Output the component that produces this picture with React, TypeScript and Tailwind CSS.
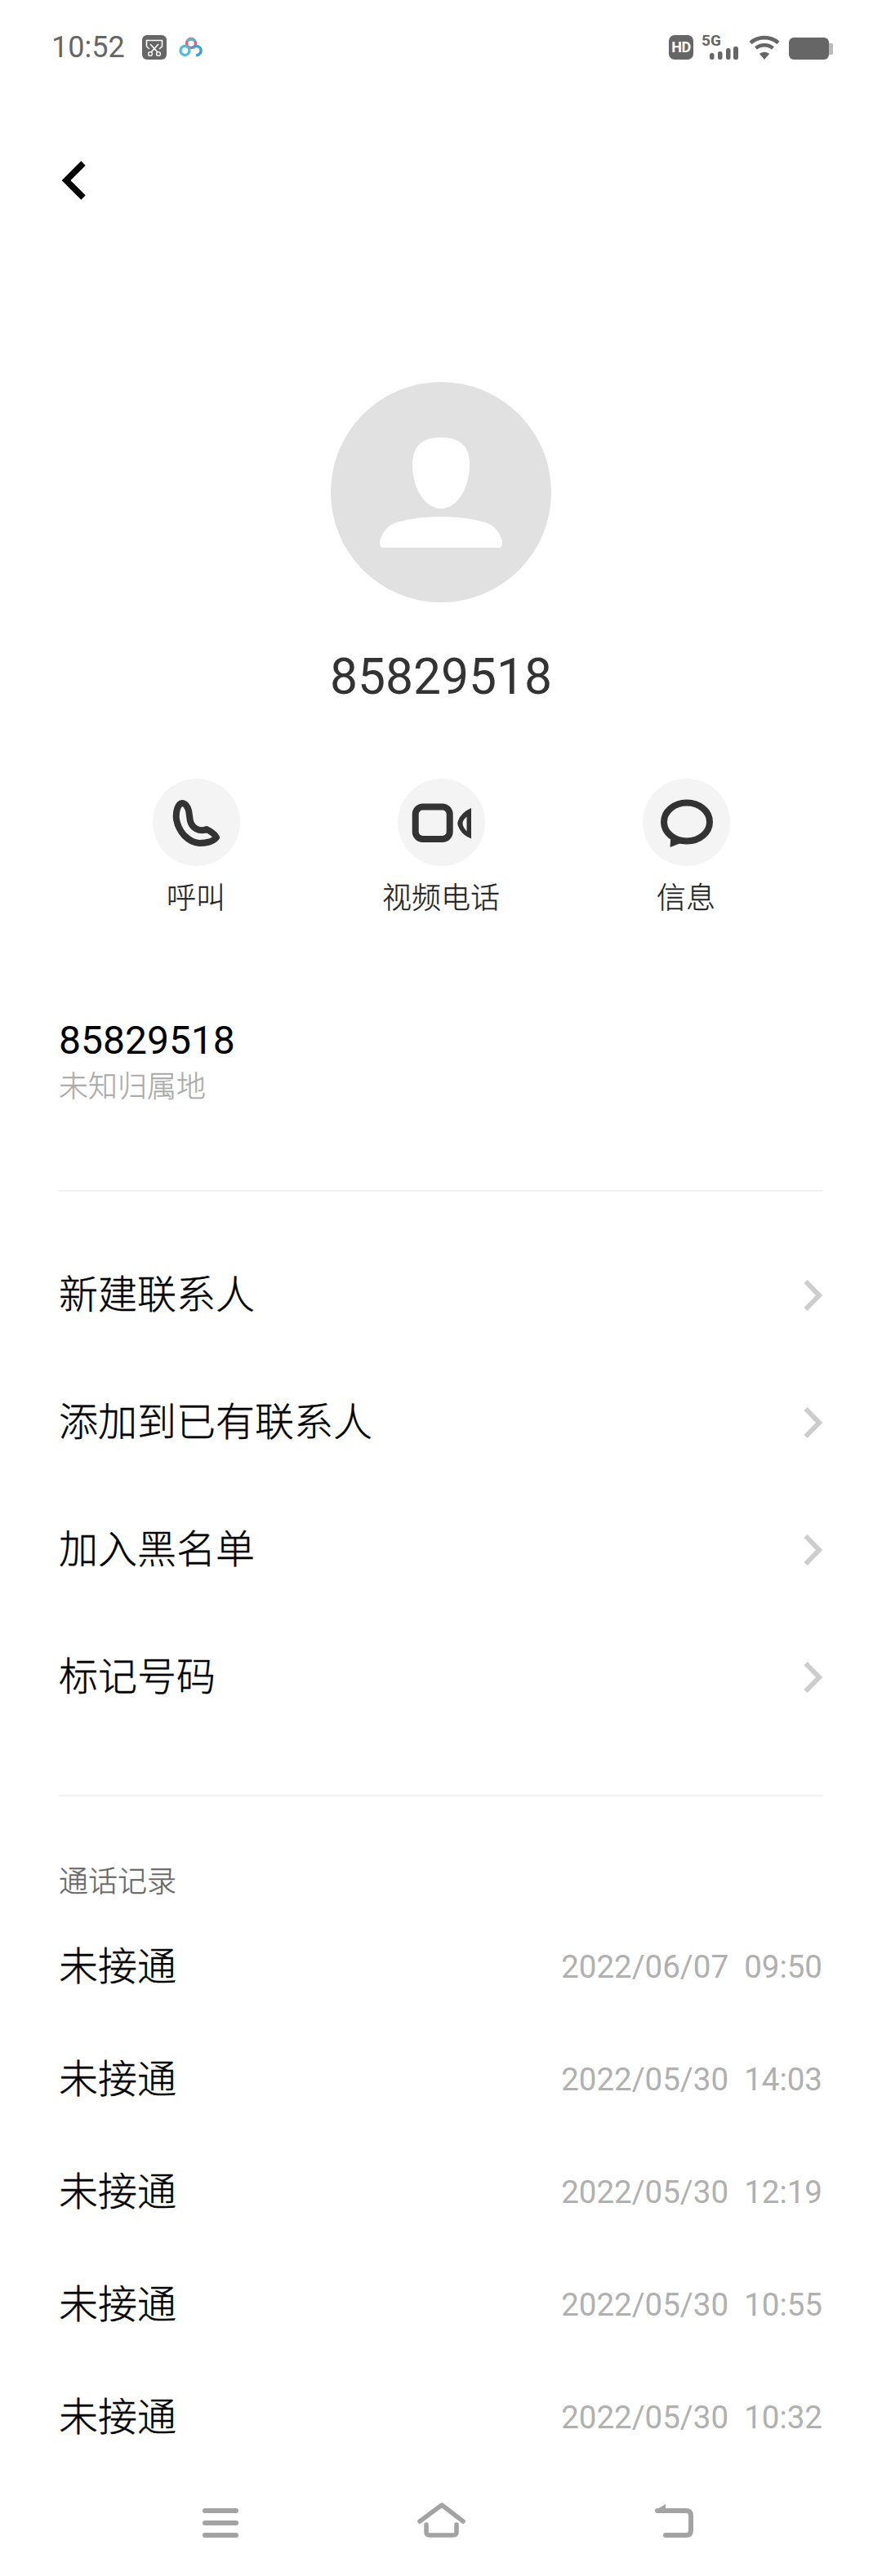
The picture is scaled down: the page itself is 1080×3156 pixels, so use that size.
const font = 'font-["Roboto","Noto_Sans_CJK_SC",sans-serif]';

function Chevron() {
  return (
    <svg width="24" height="40" viewBox="0 0 24 40" className="shrink-0">
      <path d="M3.5 3 L20 20 L3.5 37" fill="none" stroke="#cdcdcd" strokeWidth="6" />
    </svg>
  );
}

function ActionButton({ label, children }: { label: string; children: React.ReactNode }) {
  return (
    <div className="flex w-[300px] flex-col items-center">
      <div className="flex h-[107px] w-[107px] items-center justify-center rounded-full bg-[#f4f4f4]">
        <svg width="107" height="107" viewBox="0 0 107 107">{children}</svg>
      </div>
      <div className="mt-[15px] text-[36px] font-light leading-[50px] text-[#222222] [-webkit-text-stroke:0.3px_#222222]">{label}</div>
    </div>
  );
}

const menu = ["新建联系人", "添加到已有联系人", "加入黑名单", "标记号码"];
const records = [
  "2022/06/07  09:50",
  "2022/05/30  14:03",
  "2022/05/30  12:19",
  "2022/05/30  10:55",
  "2022/05/30  10:32",
];

export default function App() {
  return (
    <div className={`flex h-[3156px] w-[1080px] flex-col overflow-hidden bg-white ${font}`}>
      {/* status bar */}
      <div className="flex h-[116px] items-start justify-between pl-[63px] pr-[60px] pt-[43px]">
        <div className="flex items-center">
          <span className="text-[36px] leading-[30px] text-[#666666]">10:52</span>
          <svg width="30" height="30" viewBox="0 0 30 30" className="ml-[21px]">
            <rect width="30" height="30" rx="6" fill="#666666" />
            <path d="M5.5 14V6.5H24.5V14L21 17" fill="none" stroke="#fff" strokeWidth="1.6" />
            <path d="M5.5 14L9 17" fill="none" stroke="#fff" strokeWidth="1.6" />
            <path d="M10 11L19 21M20 11L11 21" fill="none" stroke="#fff" strokeWidth="1.6" />
            <circle cx="10" cy="23" r="2.4" fill="none" stroke="#fff" strokeWidth="1.4" />
            <circle cx="20" cy="23" r="2.4" fill="none" stroke="#fff" strokeWidth="1.4" />
          </svg>
          <svg width="30" height="26" viewBox="0 0 30 26" className="ml-[15px]">
            <circle cx="15" cy="8" r="5.5" fill="none" stroke="#e0607f" strokeWidth="3.4" />
            <path d="M10.5 5.5A5.5 5.5 0 0 1 19.5 5.5" fill="none" stroke="#52b8cf" strokeWidth="3.4" />
            <circle cx="7.5" cy="17" r="5.5" fill="none" stroke="#52bdd6" strokeWidth="3.4" />
            <path d="M17 14A5.5 5.5 0 1 1 21 22.5" fill="none" stroke="#3f9fcf" strokeWidth="3.4" />
          </svg>
        </div>
        <div className="flex items-start">
          <div className="flex h-[30px] w-[30px] items-center justify-center rounded-[7px] bg-[#666666] text-[18px] font-bold leading-none tracking-[-0.5px] text-white">
            HD
          </div>
          <div className="relative ml-[10px] h-[30px] w-[46px]">
            <span className="absolute left-0 top-[-2px] text-[19px] font-bold leading-[18px] text-[#666666]">5G</span>
            <svg width="46" height="30" viewBox="0 0 46 30" className="absolute left-0 top-0">
              <g fill="#666666">
                <rect x="10" y="22" width="5.5" height="8" rx="2.5" />
                <rect x="20" y="20" width="5.5" height="10" rx="2.5" />
                <rect x="30" y="16" width="5.5" height="14" rx="2.5" />
                <rect x="39" y="14" width="6" height="16" rx="2.5" />
              </g>
            </svg>
          </div>
          <svg width="38" height="30" viewBox="0 0 38 30" className="ml-[12px]">
            <path d="M2 9.5C11.5 1 26.5 1 36 9.5" fill="none" stroke="#666666" strokeWidth="4.6" />
            <path d="M8.5 16C14.5 11 23.5 11 29.5 16" fill="none" stroke="#666666" strokeWidth="4.6" />
            <path d="M13 23C17 20 21 20 25 23L19 30Z" fill="#666666" />
          </svg>
          <div className="ml-[11px] flex items-center pt-[3px]">
            <div className="h-[27px] w-[49px] rounded-[6px] bg-[#666666]" />
            <div className="h-[14px] w-[5px] rounded-r-[2px] bg-[#bbbbbb]" />
          </div>
        </div>
      </div>

      {/* back */}
      <div className="flex h-[210px] items-center pl-[73px]">
        <svg width="36" height="50" viewBox="0 0 36 50">
          <path d="M29 4 L8 25 L29 46" fill="none" stroke="#000" strokeWidth="7.5" />
        </svg>
      </div>

      {/* avatar */}
      <div className="mt-[142px] flex justify-center">
        <svg width="270" height="270" viewBox="0 0 270 270">
          <circle cx="135" cy="135" r="135" fill="#e1e1e1" />
          <path d="M135 68C160 68 170 80 170 101C170 130 155 155 135 155C115 155 100 130 100 101C100 80 110 68 135 68Z" fill="#fff" />
          <path d="M135 165C160 165 180 169 192 173C203 177 210 190 210 198Q210 203 205 203H65Q60 203 60 198C60 190 67 177 78 173C90 169 110 165 135 165Z" fill="#fff" />
        </svg>
      </div>
      <div className="mt-[57px] text-center text-[60.5px] leading-[70px] text-[#333333]">85829518</div>

      {/* actions */}
      <div className="mt-[89px] flex justify-center">
        <ActionButton label="呼叫">
          <path
            d="M36 30C40 30 43 35 44 39C45 44 45 47 46 52C48 60 57 66 66 62C70 64 76 68 78 72C74 77 65 79 57 79C44 78 32 66 29 50C28 42 30 31 36 30Z"
            fill="none"
            stroke="#333333"
            strokeWidth="8"
            strokeLinejoin="round"
          />
        </ActionButton>
        <ActionButton label="视频电话">
          <rect x="21.7" y="34.5" width="42" height="39.5" rx="9" fill="none" stroke="#333333" strokeWidth="8" />
          <path
            fillRule="evenodd"
            d="M90 36V73.5Q78 69 74 58Q72.5 54.8 74 51.5Q78 41 90 36ZM84.5 46.5Q79.5 51 79.5 54.8Q79.5 59 84.5 64.5Z"
            fill="#333333"
          />
        </ActionButton>
        <ActionButton label="信息">
          <ellipse cx="54" cy="53" rx="28" ry="23.5" fill="none" stroke="#333333" strokeWidth="8" />
          <path d="M33.5 84L34.5 68L49 78Z" fill="#333333" />
        </ActionButton>
      </div>

      {/* number */}
      <div className="mt-[119px] pl-[72px] pr-[73px]">
        <div className="text-[48px] leading-[60px] text-black">85829518</div>
        <div className="mt-[2px] text-[36px] font-light leading-[50px] text-[#aaaaaa] [-webkit-text-stroke:0.3px_#aaaaaa]">未知归属地</div>
      </div>
      <div className="mx-[72px] mt-[101px] h-[2px] bg-[#f2f2f2]" />

      {/* menu */}
      <div className="mt-[49px] flex flex-col pl-[72px] pr-[73px]">
        {menu.map((item) => (
          <div key={item} className="flex h-[156px] items-center justify-between">
            <span className="text-[48px] font-light leading-[60px] text-black [-webkit-text-stroke:0.4px_#000000]">{item}</span>
            <Chevron />
          </div>
        ))}
      </div>
      <div className="mx-[72px] mt-[66px] h-[2px] bg-[#f2f2f2]" />

      {/* records */}
      <div className="mt-[80px] pl-[72px] pr-[73px] text-[36px] font-light leading-[50px] text-[#666666] [-webkit-text-stroke:0.3px_#666666]">通话记录</div>
      <div className="mt-[10px] flex flex-col pl-[72px] pr-[73px]">
        {records.map((time) => (
          <div key={time} className="flex h-[138px] items-center justify-between">
            <span className="text-[48px] font-light leading-[60px] text-black [-webkit-text-stroke:0.4px_#000000]">未接通</span>
            <span className="whitespace-pre text-[38.5px] leading-[50px] text-[#b0b0b0]">{time}</span>
          </div>
        ))}
      </div>

      {/* nav */}
      <div className="flex flex-1 items-start pl-[246px] pt-[35px]">
        <svg width="48" height="48" viewBox="0 0 48 48">
          <path d="M5 10H43M5 25H43M5 40H43" fill="none" stroke="#a3a3a3" strokeWidth="6" strokeLinecap="round" />
        </svg>
        <svg width="64" height="48" viewBox="0 0 64 48" className="ml-[214px]">
          <path d="M6 23L33 3L59 23" fill="none" stroke="#a3a3a3" strokeWidth="5.5" strokeLinecap="round" strokeLinejoin="round" />
          <path d="M14 27V36Q14 40 18 40H47Q51 40 51 36V27" fill="none" stroke="#a3a3a3" strokeWidth="5.5" strokeLinecap="round" />
        </svg>
        <svg width="56" height="48" viewBox="0 0 56 48" className="ml-[226px]">
          <path d="M17 2L5 9L17 12Z" fill="#a3a3a3" />
          <path d="M7 10H42Q48 10 48 16V34Q48 40 42 40H17" fill="none" stroke="#a3a3a3" strokeWidth="6" strokeLinecap="round" />
        </svg>
      </div>
    </div>
  );
}
